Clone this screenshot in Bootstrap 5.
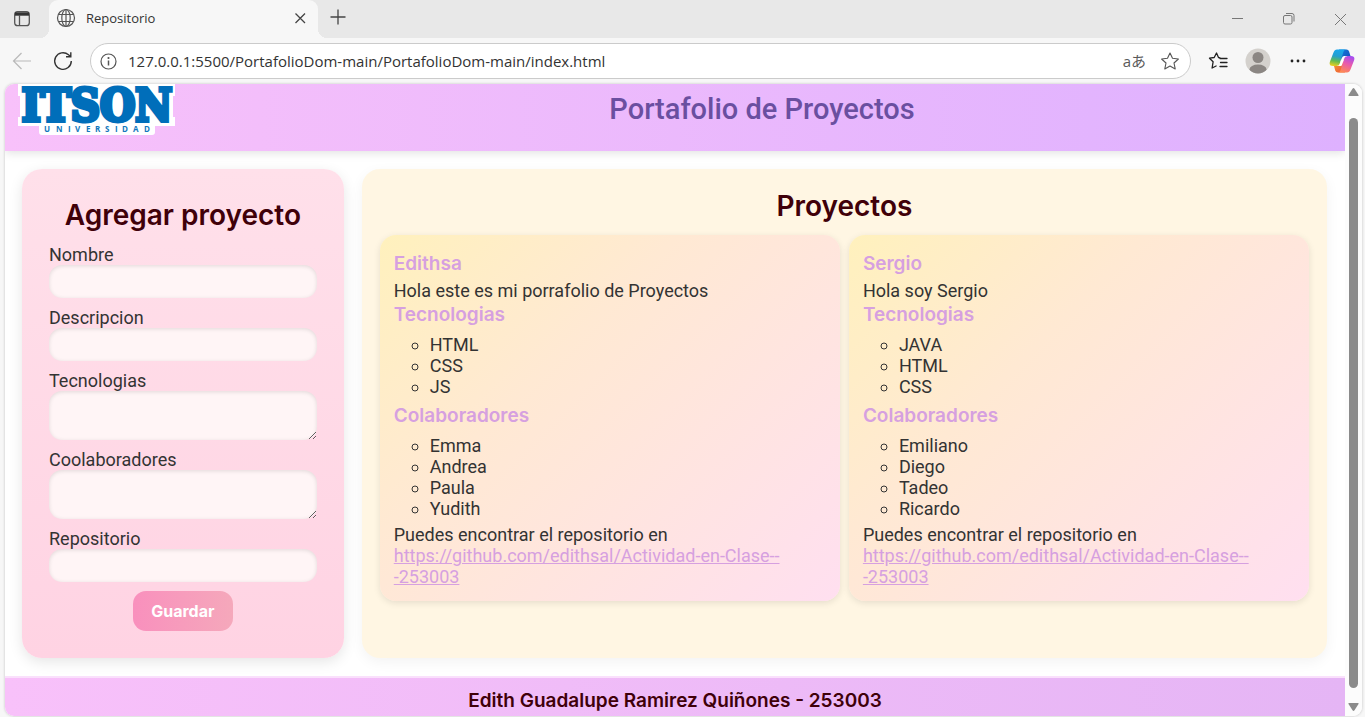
<!DOCTYPE html>
<html lang="es">
<head>
<meta charset="utf-8">
<meta name="viewport" content="width=device-width, initial-scale=1">
<title>Repositorio</title>
<link href="https://cdn.jsdelivr.net/npm/bootstrap@5.3.0/dist/css/bootstrap.min.css" rel="stylesheet">
<style>
  body { background: #f7f7f7; font-family: Roboto, sans-serif; font-size: 18px; line-height: 21px; color: #333; }
  svg { display: block; flex: none; }
  h1, h2, h3, h4 { margin: 0; }
  .plain { background: none; border: 0; padding: 0; color: #333; }

  /* browser window */
  .tabstrip { background: #e8e8e8; height: 38px; }
  .tabstrip .menu-btn { width: 49px; }
  .tab-active { background: #f7f7f7; width: 269px; border-radius: 9px 9px 0 0; padding: 0 11px 3px 7px; gap: 10px; font: 13px/20px "Open Sans", sans-serif; position: relative; }
  .tab-active::before, .tab-active::after { content: ""; position: absolute; bottom: 0; width: 9px; height: 9px; }
  .tab-active::before { right: 100%; background: radial-gradient(circle at 0 0, #e8e8e8 9px, #f7f7f7 9px); }
  .tab-active::after { left: 100%; background: radial-gradient(circle at 100% 0, #e8e8e8 9px, #f7f7f7 9px); }
  .toolbar { height: 46px; padding: 0 10px 0 12px; }
  .address { height: 36px; border: 1px solid #cbcbcb; border-radius: 18px; background: #fff; padding: 0 10px 0 9px; margin-left: 16px; }
  .address input { border: 0; outline: 0; background: none; color: #333; font: 15px/20px "Open Sans", sans-serif; padding: 0; margin-left: 11px; min-width: 0; }
  .translate { font: 15px/20px "Open Sans", "Noto Sans CJK JP", sans-serif; color: #5a5a5a; margin-right: 14px; }
  .more-btn { padding: 0 2px; }
  .viewport { margin: 0 3px 1px 5px; border-radius: 9px; overflow: hidden; background: #fff; box-shadow: 0 0 2px 1px #ddd; }
  .scrollbar-col { width: 17px; flex-shrink: 0; padding: 4px 0 5px; background: #fcfcfc; }
  .thumb { width: 9px; background: #8b8b8b; border-radius: 5px; margin: 21px 0 14px; }

  /* page */
  .page-body { min-width: 0; }
  .page-head { background: linear-gradient(90deg, #f8c1fa, #deb1ff); height: 67px; box-shadow: 0 2px 9px rgba(0,0,0,.12); display: grid; grid-template-columns: 174px 1fr; }
  .page-head svg { margin-left: 13px; }
  .brand-title { font: 500 29px/34px Roboto, sans-serif; color: #6a4fa0; padding-top: 8px; }
  .page-main { display: grid; grid-template-columns: 1fr 3fr; gap: 18px; padding: 18px 18px 18px 17px; }
  .headline { font: 600 28px/39px Inter, sans-serif; color: #400009; text-align: center; margin-bottom: 9px; }
  .form-card { background: linear-gradient(180deg, #ffe0ea, #ffd3e3); border-radius: 20px; padding: 27px; box-shadow: 0 4px 14px rgba(0,0,0,.1); }
  .form-card label { display: block; }
  .field { display: block; width: 100%; height: 33px; border: 0; border-radius: 13px; background: #fff5f6; box-shadow: inset 0 1px 4px rgba(0,0,0,.12); padding: 6px 10px; margin-bottom: 9px; font-size: 16px; }
  textarea.field { height: 49px; }
  .save { width: 100px; height: 40px; border: 0; border-radius: 13px; background: linear-gradient(90deg, #f990bd, #f5a8bb); color: #fff; font: 700 16px/20px Inter, sans-serif; }
  .projects { background: #fff6e3; border-radius: 18px; padding: 18px; box-shadow: 0 4px 14px rgba(0,0,0,.05); }
  .project-grid { display: grid; grid-template-columns: 1fr 1fr; gap: 9px; }
  .project { background: linear-gradient(135deg, #fff1bd, #ffe9d3 36%, #ffdff0); border-radius: 16px; padding: 15px 14px 14px; box-shadow: 0 2px 7px rgba(0,0,0,.1); }
  .project h3, .project h4 { font: 600 19px/27px Inter, sans-serif; color: #d6a0e0; }
  .project h3 { margin-bottom: 3px; }
  .project p { margin: 0; }
  .project ul { list-style: circle; padding-left: 36px; margin: 6px 0 5px; }
  .project a { color: #d6a0e0; }
  .page-foot { background: linear-gradient(90deg, #f8c1fa, #e5b5f5); border-top: 2px solid #fae0fc; min-height: 40px; font: 600 19px/27px Inter, sans-serif; color: #400009; padding-top: 9px; text-align: center; }
</style>
</head>
<body class="d-flex flex-column min-vh-100">

<div class="tabstrip d-flex">
  <button class="plain menu-btn ps-2 d-flex align-items-center" aria-label="Pestañas">
    <svg class="ms-1" width="20" height="20" viewBox="0 0 20 20" fill="none" stroke="#555" stroke-width="1.3"><rect x="2.700" y="2.700" width="14.600" height="14" rx="3"/><path d="M3 5h14" stroke="#333" stroke-width="3.400"/><path d="M7.500 6v11"/></svg>
  </button>
  <div class="tab-active d-flex align-items-center">
    <svg width="20" height="20" viewBox="0 0 20 20" fill="none" stroke="#555" stroke-width="1.200"><circle cx="10" cy="10" r="8.500"/><ellipse cx="10" cy="10" rx="4.200" ry="8.500"/><path d="M10 1.500v17M2.500 6.500h15M2.500 13.500h15"/></svg>
    <span class="flex-fill">Repositorio</span>
    <button class="plain" aria-label="Cerrar pestaña"><svg width="14" height="14" viewBox="0 0 14 14" stroke="#444" stroke-width="1.300"><path d="M2.500 2.500l9.500 9.500M12 2.500L2.500 12"/></svg></button>
  </div>
  <button class="plain px-2 pb-1 ms-1" aria-label="Nueva pestaña"><svg width="16" height="16" viewBox="0 0 16 16" stroke="#444" stroke-width="1.300"><path d="M8 .5v15M.5 8h15"/></svg></button>
  <div class="ms-auto d-flex align-items-center pe-3">
    <button class="plain me-4" aria-label="Minimizar"><svg width="28" height="14" viewBox="0 0 28 14" stroke="#777"><path d="M11 6.500h11"/></svg></button>
    <button class="plain me-4" aria-label="Restaurar"><svg class="ms-2 me-1" width="16" height="14" viewBox="0 0 16 14" fill="none" stroke="#777"><rect x="2.500" y="3.500" width="8.500" height="8.500" rx="1.500"/><path d="M5 1.500h6a2 2 0 0 1 2 2v6"/></svg></button>
    <button class="plain ms-2" aria-label="Cerrar"><svg width="16" height="14" viewBox="0 0 16 14" stroke="#777"><path d="M2 2l11 11M13 2L2 13"/></svg></button>
  </div>
</div>

<div class="toolbar d-flex align-items-center">
  <button class="plain" aria-label="Atrás"><svg width="20" height="20" viewBox="0 0 20 20" fill="none" stroke="#b9b9b9" stroke-width="1.200"><path d="M19 10H1.500M9.500 2L1.500 10l8 8"/></svg></button>
  <button class="plain ms-3 ps-1" aria-label="Actualizar"><svg width="22" height="20" viewBox="0 0 22 20" fill="none" stroke="#333" stroke-width="1.400"><path d="M19.300 10a8.300 8.300 0 1 1-2.800-6.200L18.500 5.500M18.800 1.200v4.600h-4.800"/></svg></button>
  <div class="address d-flex align-items-center flex-fill">
    <svg width="17" height="17" viewBox="0 0 17 17" fill="none" stroke="#555" stroke-width="1.200"><circle cx="8.500" cy="8.500" r="7.500"/><path d="M8.500 7.500V12.500" stroke-width="1.500"/><circle cx="8.500" cy="5" r=".5" fill="#555"/></svg>
    <input class="flex-fill" type="text" aria-label="Dirección" value="127.0.0.1:5500/PortafolioDom-main/PortafolioDom-main/index.html">
    <span class="translate">aあ</span>
    <svg width="20" height="20" viewBox="0 0 20 20" fill="none" stroke="#555" stroke-width="1.100" stroke-linejoin="round"><path d="M10 2l2.500 5.300 5.900.7-4.400 4 1.200 5.900L10 15l-5.200 2.900L6 12 1.600 8l5.900-.7z"/></svg>
  </div>
  <svg class="ms-3" width="22" height="20" viewBox="0 0 22 20" fill="none" stroke="#222" stroke-width="1.300" stroke-linejoin="round" stroke-linecap="round"><path d="M13 6.800l-1.500-.3L9.500 2 7.200 6.500 2.500 7.200l3.600 3.600-1 6.200 4-2M13 7.500h7M13.500 11.500H20M13 15.500h7"/></svg>
  <svg class="ms-3" width="26" height="26" viewBox="0 0 26 26"><clipPath id="av"><circle cx="13" cy="13" r="12.500"/></clipPath><circle cx="13" cy="13" r="12.500" fill="#d4d1cd"/><g clip-path="url(#av)" fill="#8b8683"><circle cx="13" cy="9.500" r="5.500"/><ellipse cx="13" cy="21.500" rx="8.500" ry="5"/></g></svg>
  <button class="plain more-btn mx-3" aria-label="Más opciones"><svg width="18" height="6" viewBox="0 0 18 6" fill="#222"><circle cx="3" cy="3" r="1.400"/><circle cx="9" cy="3" r="1.400"/><circle cx="15" cy="3" r="1.400"/></svg></button>
  <svg class="ms-1" width="26" height="26" viewBox="0 0 26 26">
    <defs>
      <linearGradient id="ca" x1=".5" y1="0" x2=".3" y2="1"><stop offset="0" stop-color="#19a7ec"/><stop offset=".4" stop-color="#239fd0"/><stop offset=".7" stop-color="#62bb52"/><stop offset="1" stop-color="#e9cf20"/></linearGradient>
      <linearGradient id="cb" x1=".7" y1="0" x2=".3" y2="1"><stop offset="0" stop-color="#a64df0"/><stop offset=".45" stop-color="#e95aac"/><stop offset="1" stop-color="#ff8b50"/></linearGradient>
      <linearGradient id="cc" x1="0" y1="0" x2="1" y2="1"><stop offset="0" stop-color="#1480dd"/><stop offset="1" stop-color="#1447b8"/></linearGradient>
      <linearGradient id="cd" x1="0" y1="0" x2="1" y2="1"><stop offset="0" stop-color="#f3a02c"/><stop offset="1" stop-color="#ee533e"/></linearGradient>
    </defs>
    <path d="M10 1.500h7.500q2 0 2.600 2L21.500 8H18q-2 0-3 2l-2 4-2-9z" fill="url(#cc)"/>
    <path d="M16 24.500H9q-2.200 0-2.800-2L5 18h3q2.500 0 3.300-2.500L13 12l2 9z" fill="url(#cd)"/>
    <path d="M17.500 1.500H8Q5.500 1.500 4.500 4.500L1 13.500Q-.5 18 4 18h3.500q2.500 0 3.300-2.500l3.400-11Q15 1.500 17.500 1.500z" fill="url(#ca)"/>
    <path d="M8.500 24.500H18q2.500 0 3.500-3l3.500-9Q26.500 8 22 8h-3.500q-2.500 0-3.300 2.500l-3.400 11Q11 24.500 8.500 24.500z" fill="url(#cb)"/>
    <path d="M15.200 8H18q-2.300 0-3 2.500l-2.200 7Q12.200 18 10.500 18H8q2.200 0 2.900-2.500l2-5.500Q13.500 8 15.200 8z" fill="#fff"/>
  </svg>
</div>

<div class="viewport d-flex flex-fill">
  <div class="page-body flex-fill d-flex flex-column">
    <header class="page-head">
      <svg width="157" height="52" viewBox="0 0 157 52" role="img" aria-label="ITSON Universidad">
        <path d="M2 0H157V12H155V33H157V42H137V48Q137 51 134 51H24Q21 51 21 48V42H0V33H2V12H0V0z" fill="#fff"/>
        <text x="79" y="37" text-anchor="middle" font-family="DejaVu Serif Condensed, DejaVu Serif, serif" font-weight="700" font-size="45" fill="#006eba" stroke="#006eba" stroke-width="4">ITSON</text>
        <text y="48" font-family="Open Sans, sans-serif" font-weight="700" font-size="8" fill="#1377bd"><tspan x="26">U</tspan><tspan x="38">N</tspan><tspan x="50">I</tspan><tspan x="57">V</tspan><tspan x="68">E</tspan><tspan x="77">R</tspan><tspan x="87">S</tspan><tspan x="97">I</tspan><tspan x="104">D</tspan><tspan x="115">A</tspan><tspan x="126">D</tspan></text>
      </svg>
      <h1 class="brand-title text-center">Portafolio de Proyectos</h1>
    </header>

    <main class="page-main flex-fill">
      <form class="form-card">
        <h2 class="headline">Agregar proyecto</h2>
        <label for="nombre">Nombre</label>
        <input class="field" id="nombre" type="text">
        <label for="descripcion">Descripcion</label>
        <input class="field" id="descripcion" type="text">
        <label for="tecnologias">Tecnologias</label>
        <textarea class="field" id="tecnologias"></textarea>
        <label for="colaboradores">Coolaboradores</label>
        <textarea class="field" id="colaboradores"></textarea>
        <label for="repositorio">Repositorio</label>
        <input class="field" id="repositorio" type="text">
        <button class="save d-block mx-auto" type="button">Guardar</button>
      </form>

      <section class="projects">
        <h2 class="headline">Proyectos</h2>
        <div class="project-grid">
          <article class="project">
            <h3>Edithsa</h3>
            <p>Hola este es mi porrafolio de Proyectos</p>
            <h4>Tecnologias</h4>
            <ul><li>HTML</li><li>CSS</li><li>JS</li></ul>
            <h4>Colaboradores</h4>
            <ul><li>Emma</li><li>Andrea</li><li>Paula</li><li>Yudith</li></ul>
            <p>Puedes encontrar el repositorio en <br><a href="#">https://github.com/edithsal/Actividad-en-Clase--<wbr>-253003</a></p>
          </article>
          <article class="project">
            <h3>Sergio</h3>
            <p>Hola soy Sergio</p>
            <h4>Tecnologias</h4>
            <ul><li>JAVA</li><li>HTML</li><li>CSS</li></ul>
            <h4>Colaboradores</h4>
            <ul><li>Emiliano</li><li>Diego</li><li>Tadeo</li><li>Ricardo</li></ul>
            <p>Puedes encontrar el repositorio en <br><a href="#">https://github.com/edithsal/Actividad-en-Clase--<wbr>-253003</a></p>
          </article>
        </div>
      </section>
    </main>

    <footer class="page-foot">Edith Guadalupe Ramirez Quiñones - 253003</footer>
  </div>
  <div class="scrollbar-col d-flex flex-column align-items-center">
    <svg width="11" height="9" viewBox="0 0 11 9" fill="#8b8b8b"><path d="M5.500 0Q6 0 6.500.8L10.500 7q.5 1-.5 1H1Q0 8 .5 7L4.500.8Q5 0 5.500 0z"/></svg>
    <div class="thumb flex-fill"></div>
    <svg width="11" height="9" viewBox="0 0 11 9" fill="#8b8b8b"><path d="M5.500 9Q6 9 6.500 8.200L10.500 2q.5-1-.5-1H1Q0 1 .5 2L4.500 8.200Q5 9 5.500 9z"/></svg>
  </div>
</div>

<script src="https://cdn.jsdelivr.net/npm/bootstrap@5.3.0/dist/js/bootstrap.bundle.min.js"></script>
</body>
</html>
